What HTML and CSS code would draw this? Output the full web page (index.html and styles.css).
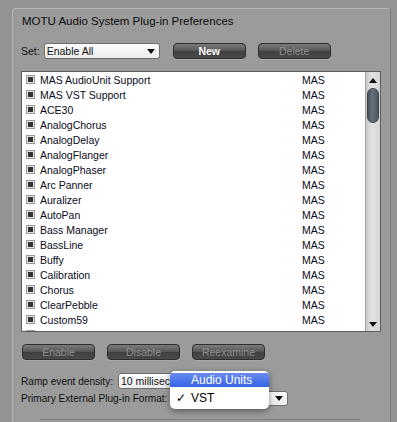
FILE: index.html
```html
<!DOCTYPE html>
<html>
<head>
<meta charset="utf-8">
<link rel="stylesheet" href="styles.css">
</head>
<body>
<div class="panel">
  <div class="title">MOTU Audio System Plug-in Preferences</div>
  <div class="set-row">
    <span class="label">Set:</span>
    <div class="select set-select"><span class="sel-text">Enable All</span><span class="arrow"></span></div>
    <div class="btn btn-new">New</div>
    <div class="btn disabled btn-delete">Delete</div>
  </div>
  <div class="list">
    <div class="rows">
      <div class="row"><span class="cb"></span><span class="name">MAS AudioUnit Support</span><span class="type">MAS</span></div>
      <div class="row"><span class="cb"></span><span class="name">MAS VST Support</span><span class="type">MAS</span></div>
      <div class="row"><span class="cb"></span><span class="name">ACE30</span><span class="type">MAS</span></div>
      <div class="row"><span class="cb"></span><span class="name">AnalogChorus</span><span class="type">MAS</span></div>
      <div class="row"><span class="cb"></span><span class="name">AnalogDelay</span><span class="type">MAS</span></div>
      <div class="row"><span class="cb"></span><span class="name">AnalogFlanger</span><span class="type">MAS</span></div>
      <div class="row"><span class="cb"></span><span class="name">AnalogPhaser</span><span class="type">MAS</span></div>
      <div class="row"><span class="cb"></span><span class="name">Arc Panner</span><span class="type">MAS</span></div>
      <div class="row"><span class="cb"></span><span class="name">Auralizer</span><span class="type">MAS</span></div>
      <div class="row"><span class="cb"></span><span class="name">AutoPan</span><span class="type">MAS</span></div>
      <div class="row"><span class="cb"></span><span class="name">Bass Manager</span><span class="type">MAS</span></div>
      <div class="row"><span class="cb"></span><span class="name">BassLine</span><span class="type">MAS</span></div>
      <div class="row"><span class="cb"></span><span class="name">Buffy</span><span class="type">MAS</span></div>
      <div class="row"><span class="cb"></span><span class="name">Calibration</span><span class="type">MAS</span></div>
      <div class="row"><span class="cb"></span><span class="name">Chorus</span><span class="type">MAS</span></div>
      <div class="row"><span class="cb"></span><span class="name">ClearPebble</span><span class="type">MAS</span></div>
      <div class="row"><span class="cb"></span><span class="name">Custom59</span><span class="type">MAS</span></div>
      <div class="row"><span class="cb"></span></div>
    </div>
    <div class="scrollbar">
      <div class="sb-up"></div>
      <div class="sb-track"><div class="sb-thumb"></div></div>
      <div class="sb-down"></div>
    </div>
  </div>
  <div class="btn-row">
    <div class="btn disabled">Enable</div>
    <div class="btn disabled">Disable</div>
    <div class="btn disabled">Reexamine</div>
  </div>
  <div class="opt-row">
    <span class="label">Ramp event density:</span>
    <div class="select ramp-select"><span class="sel-text">10 milliseconds</span><span class="arrow"></span></div>
  </div>
  <div class="opt-row opt-row2">
    <span class="label">Primary External Plug-in Format:</span>
    <div class="select fmt-select"><span class="sel-text"></span><span class="arrow"></span></div>
  </div>
  <div class="rule"></div>
</div>
<div class="menu">
  <div class="menu-item active">Audio Units</div>
  <div class="menu-item"><span class="check">✓</span>VST</div>
</div>
</body>
</html>
```
FILE: styles.css
```css
html, body {
  margin: 0;
  padding: 0;
}
body {
  width: 397px;
  height: 422px;
  overflow: hidden;
  background: #939393;
  font-family: "Liberation Sans", Arial, sans-serif;
  font-size: 10.5px;
  color: #111;
  position: relative;
  padding: 8px 0 0 12px;
  box-sizing: border-box;
}
.panel {
  width: 379px;
  height: 430px;
  box-sizing: border-box;
  background: #9b9b9b;
  border-top: 1px solid #b4b4b4;
  border-left: 1px solid #b4b4b4;
  border-right: 1px solid #7a7a7a;
  border-top-left-radius: 4px;
  border-top-right-radius: 4px;
  padding: 5px 0 0 8px;
}
.title {
  font-size: 11.5px;
  line-height: 14px;
  margin-left: 1px;
  color: #0c0c0c;
}
.set-row {
  display: flex;
  align-items: center;
  margin-top: 15px;
  height: 16px;
}
.label {
  color: #111;
  white-space: nowrap;
}
.opt-row .label {
  font-size: 10.1px;
}
.select {
  position: relative;
  height: 16px;
  box-sizing: border-box;
  background: linear-gradient(#fdfdfd, #ececec);
  border: 1px solid #6f6f6f;
  border-radius: 3px;
  display: flex;
  align-items: center;
  padding-left: 2px;
  overflow: hidden;
  white-space: nowrap;
}
.sel-text {
  flex: 1;
  overflow: hidden;
}
.arrow {
  width: 0;
  height: 0;
  border-left: 4px solid transparent;
  border-right: 4px solid transparent;
  border-top: 5px solid #111;
  margin: 0 4px 0 4px;
}
.set-select {
  margin-left: 4px;
  width: 116px;
}
.btn {
  width: 73px;
  height: 16px;
  box-sizing: border-box;
  border: 1px solid #2e2e2e;
  border-radius: 4px;
  background: linear-gradient(#7a7a7a, #555 50%, #3f3f3f 51%, #4a4a4a);
  color: #fff;
  font-weight: bold;
  text-align: center;
  line-height: 14px;
  font-size: 10.5px;
  box-shadow: 0 1px 0 rgba(255,255,255,0.15);
}
.btn.disabled {
  color: #8f8f8f;
  font-weight: normal;
}
.btn-new {
  margin-left: 13px;
}
.btn-delete {
  margin-left: 12px;
}
.list {
  margin-top: 12px;
  width: 360px;
  height: 261px;
  box-sizing: border-box;
  border: 1px solid #5e5e5e;
  background: #fff;
  display: flex;
  overflow: hidden;
}
.rows {
  flex: 1;
  overflow: hidden;
}
.row {
  height: 15px;
  display: flex;
  align-items: center;
  color: #0a0a20;
}
.cb {
  width: 9px;
  height: 9px;
  box-sizing: border-box;
  border: 1px solid #9a9a9a;
  background: #e4e4e4;
  margin-left: 4px;
  position: relative;
  flex: none;
}
.cb::after {
  content: "";
  position: absolute;
  left: 1px;
  top: 1px;
  width: 5px;
  height: 5px;
  background: #333;
}
.name {
  margin-left: 5px;
  width: 262px;
}
.type {
  color: #0a0a20;
}
.scrollbar {
  width: 15px;
  flex: none;
  background: linear-gradient(90deg, #c9c9c9, #e2e2e2 40%, #d6d6d6);
  border-left: 1px solid #a0a0a0;
  box-sizing: border-box;
  display: flex;
  flex-direction: column;
  align-items: center;
}
.sb-up {
  margin-top: 6px;
  width: 0;
  height: 0;
  border-left: 4px solid transparent;
  border-right: 4px solid transparent;
  border-bottom: 5px solid #111;
}
.sb-track {
  flex: 1;
  width: 100%;
  padding: 5px 1px 0 1px;
  box-sizing: border-box;
}
.sb-thumb {
  height: 35px;
  border-radius: 6px;
  background: linear-gradient(90deg, #47525c, #66727c 40%, #4d5862);
  border: 1px solid #3a434b;
  box-sizing: border-box;
}
.sb-down {
  margin-bottom: 4px;
  width: 0;
  height: 0;
  border-left: 4px solid transparent;
  border-right: 4px solid transparent;
  border-top: 5px solid #111;
}
.btn-row {
  display: flex;
  gap: 12px;
  margin-top: 12px;
  margin-left: 1px;
}
.opt-row {
  display: flex;
  align-items: center;
  height: 16px;
  margin-top: 13px;
}
.opt-row2 {
  margin-top: 2px;
  height: 15px;
}
.ramp-select {
  margin-left: 5px;
  width: 150px;
}
.fmt-select {
  margin-left: 5px;
  width: 116px;
  height: 15px;
}
.rule {
  margin: 13px 0 0 19px;
  width: 320px;
  height: 1px;
  background: #808080;
}
.menu {
  position: absolute;
  left: 170px;
  top: 371px;
  width: 99px;
  height: 38px;
  background: #fff;
  border-radius: 5px;
  box-shadow: 0 2px 6px rgba(0,0,0,0.45);
  overflow: hidden;
  font-size: 12px;
  padding-top: 2px;
  box-sizing: border-box;
}
.menu-item {
  height: 14px;
  line-height: 14px;
  padding-left: 21px;
  position: relative;
  color: #000;
  margin-bottom: 4px;
}
.menu-item.active {
  background: linear-gradient(#6a8cf0, #3563e6);
  color: #fff;
}
.check {
  position: absolute;
  left: 6px;
  top: 0;
}
```
